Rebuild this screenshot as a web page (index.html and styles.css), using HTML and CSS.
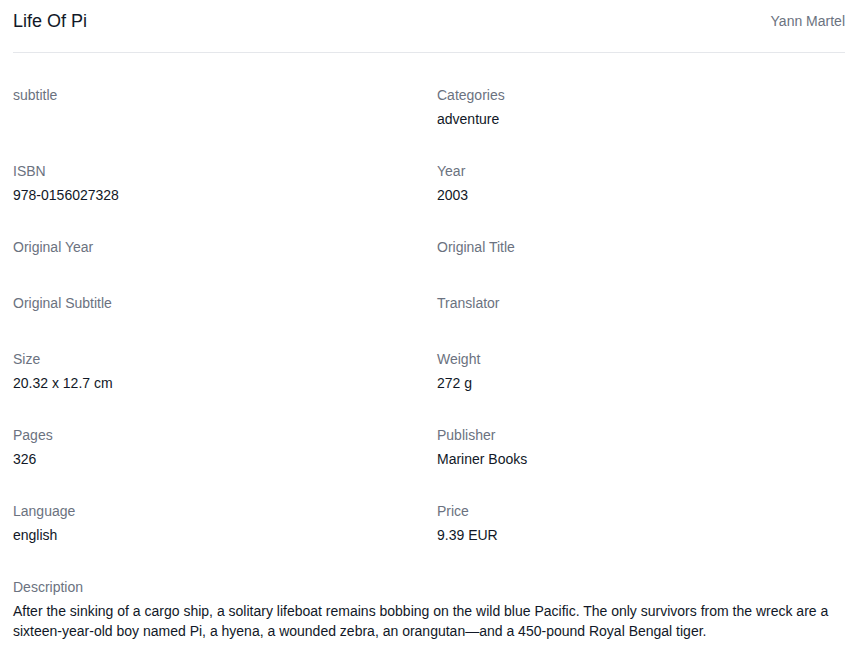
FILE: index.html
```html
<!DOCTYPE html>
<html lang="en">
<head>
<meta charset="utf-8">
<title>Life Of Pi</title>
<link rel="stylesheet" href="styles.css">
</head>
<body>
<div class="page">
  <header class="header">
    <h1 class="title">Life Of Pi</h1>
    <span class="author">Yann Martel</span>
  </header>
  <dl class="grid">
    <div class="field"><dt>subtitle</dt><dd></dd></div>
    <div class="field"><dt>Categories</dt><dd>adventure</dd></div>
    <div class="field"><dt>ISBN</dt><dd>978-0156027328</dd></div>
    <div class="field"><dt>Year</dt><dd>2003</dd></div>
    <div class="field"><dt>Original Year</dt><dd></dd></div>
    <div class="field"><dt>Original Title</dt><dd></dd></div>
    <div class="field"><dt>Original Subtitle</dt><dd></dd></div>
    <div class="field"><dt>Translator</dt><dd></dd></div>
    <div class="field"><dt>Size</dt><dd>20.32 x 12.7 cm</dd></div>
    <div class="field"><dt>Weight</dt><dd>272 g</dd></div>
    <div class="field"><dt>Pages</dt><dd>326</dd></div>
    <div class="field"><dt>Publisher</dt><dd>Mariner Books</dd></div>
    <div class="field"><dt>Language</dt><dd>english</dd></div>
    <div class="field"><dt>Price</dt><dd>9.39 EUR</dd></div>
    <div class="field wide"><dt>Description</dt><dd>After the sinking of a cargo ship, a solitary lifeboat remains bobbing on the wild blue Pacific. The only survivors from the wreck are a sixteen-year-old boy named Pi, a hyena, a wounded zebra, an orangutan—and a 450-pound Royal Bengal tiger.</dd></div>
  </dl>
</div>
</body>
</html>
```

FILE: styles.css
```css
html, body {
  margin: 0;
  padding: 0;
  background: #ffffff;
}
body {
  font-family: "Liberation Sans", Arial, sans-serif;
  color: #111827;
  font-size: 14px;
  line-height: 20px;
}
.page {
  padding: 7px 9px 0 13px;
}
.header {
  display: flex;
  align-items: center;
  justify-content: space-between;
  padding-bottom: 17px;
  border-bottom: 1px solid #e5e7eb;
}
.title {
  margin: 0;
  font-size: 18px;
  line-height: 28px;
  font-weight: 400;
  color: #111827;
}
.author {
  font-size: 14px;
  line-height: 20px;
  color: #6b7280;
}
.grid {
  margin: 32px 0 0 0;
  display: grid;
  grid-template-columns: 1fr 1fr;
  column-gap: 16px;
  row-gap: 32px;
}
.field {
  display: flex;
  flex-direction: column;
}
.field dt {
  color: #6b7280;
  margin-bottom: 4px;
}
.field dd {
  margin: 0;
  color: #111827;
}
.wide {
  grid-column: 1 / -1;
}
```
